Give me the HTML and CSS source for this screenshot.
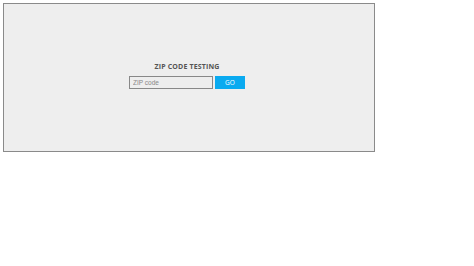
FILE: index.html
```html
<!DOCTYPE html>
<html>
	<head>
		<meta charset="UTF-8">
		<title>Zip code testing</title>
		<link rel="stylesheet" href="styles.css">
	</head>
	<body>
		<div class="frame">
			<form class="zip-form">
				<h1>ZIP CODE TESTING</h1>
				<p class="zip-row"><input type="text" name="zip" id="zip" placeholder="ZIP code" /><input type="button" class="go" value="GO" /></p>
			</form>
		</div>
	</body>
</html>
```

FILE: styles.css
```css
body{
	margin: 0;
	padding: 3px;
	font-family: "Open Sans", "Liberation Sans", sans-serif;
}
.frame{
	width: 370px;
	height: 147px;
	border: solid 1px #8a8a8a;
	background: #eeeeee;
	display: flex;
	align-items: center;
	justify-content: center;
}
.zip-form{
	text-align: center;
	margin-top: -4px;
	margin-right: 4px;
}
.zip-form h1{
	margin: 0 0 5px;
	font-size: 7px;
	font-weight: bold;
	color: #555;
	letter-spacing: 0.15px;
}
.zip-row{
	margin: 0;
	display: flex;
	gap: 2px;
}
#zip{
	box-sizing: border-box;
	width: 84px;
	height: 13px;
	border: solid 1px #888;
	background: #eee;
	font-size: 6.5px;
	padding: 0 3px;
	outline: none;
	font-family: "Liberation Sans", sans-serif;
}
#zip::placeholder{
	color: #888;
}
.go{
	box-sizing: border-box;
	width: 30px;
	height: 13px;
	border: 0;
	background: #0aaaf0;
	color: #fff;
	font-size: 6.5px;
	padding: 0;
	font-family: "Open Sans", sans-serif;
}
```
